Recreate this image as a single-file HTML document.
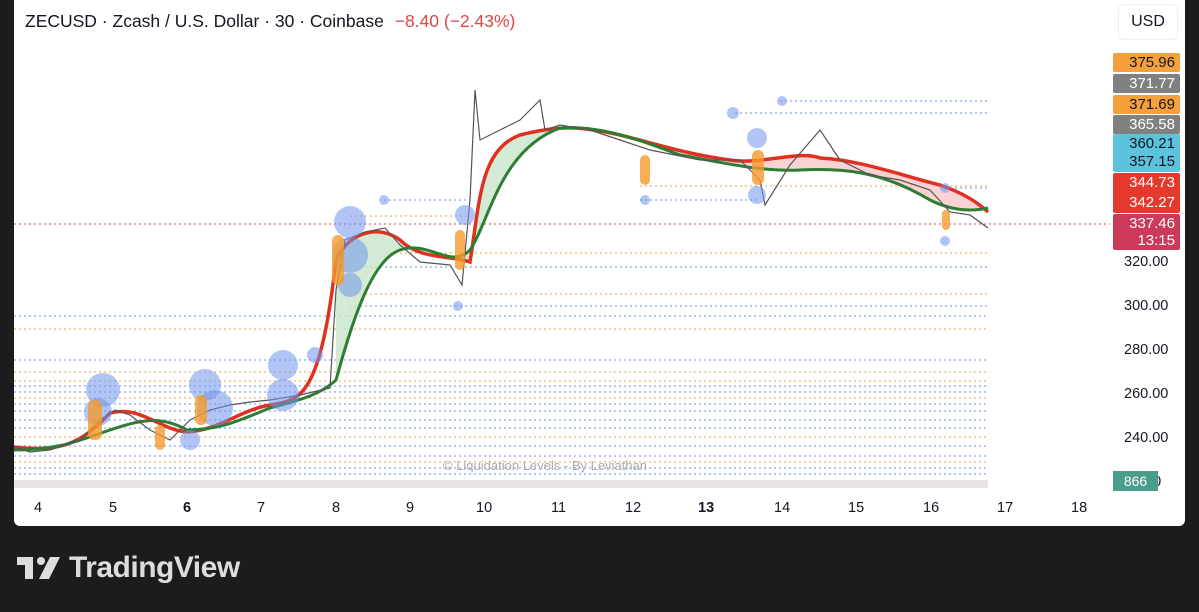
<!DOCTYPE html>
<html><head><meta charset="utf-8"><style>
body{margin:0;width:1199px;height:612px;background:#1c1c1c;overflow:hidden;font-family:"Liberation Sans",sans-serif;position:relative}
#p{position:absolute;left:14px;top:0;width:1171px;height:526px;background:#fff;border-radius:0 0 6px 6px}
.t{position:absolute;font-size:17.5px;color:#131722;white-space:nowrap}
.lab{position:absolute;left:1113px;width:67px;height:19px;font-size:15px;text-align:right;box-sizing:border-box;padding-right:5px;line-height:19px;border-radius:2px}
.ax{position:absolute;font-size:14.5px;color:#131722}
</style></head><body>
<div id="p"></div>
<svg width="1199" height="612" style="position:absolute;left:0;top:0">
<g stroke-dasharray="2,3" stroke-width="1">
<line x1="14" y1="224" x2="1110" y2="224" stroke="#e04040"/>
<line x1="780" y1="101" x2="988" y2="101" stroke="#6a8ee8"/>
<line x1="735" y1="113" x2="988" y2="113" stroke="#6a8ee8"/>
<line x1="640" y1="186" x2="988" y2="186" stroke="#f0a040"/>
<line x1="640" y1="200" x2="760" y2="200" stroke="#6a8ee8"/>
<line x1="384" y1="200" x2="470" y2="200" stroke="#6a8ee8"/>
<line x1="350" y1="216" x2="470" y2="216" stroke="#f0a040"/>
<line x1="940" y1="188" x2="988" y2="188" stroke="#6a8ee8"/>
<line x1="350" y1="253" x2="988" y2="253" stroke="#f0a040"/>
<line x1="350" y1="267" x2="988" y2="267" stroke="#6a8ee8"/>
<line x1="350" y1="294" x2="988" y2="294" stroke="#f0a040"/>
<line x1="350" y1="306" x2="988" y2="306" stroke="#6a8ee8"/>
<line x1="14" y1="316" x2="988" y2="316" stroke="#6a8ee8"/>
<line x1="14" y1="329" x2="988" y2="329" stroke="#f0a040"/>
<line x1="14" y1="360" x2="988" y2="360" stroke="#6a8ee8"/>
<line x1="14" y1="372" x2="988" y2="372" stroke="#f0a040"/>
<line x1="14" y1="381" x2="988" y2="381" stroke="#f0a040"/>
<line x1="14" y1="386" x2="988" y2="386" stroke="#6a8ee8"/>
<line x1="14" y1="392" x2="988" y2="392" stroke="#6a8ee8"/>
<line x1="14" y1="398" x2="988" y2="398" stroke="#f0a040"/>
<line x1="14" y1="404" x2="988" y2="404" stroke="#6a8ee8"/>
<line x1="14" y1="411" x2="988" y2="411" stroke="#6a8ee8"/>
<line x1="14" y1="420" x2="988" y2="420" stroke="#6a8ee8"/>
<line x1="14" y1="428" x2="988" y2="428" stroke="#6a8ee8"/>
<line x1="14" y1="437" x2="988" y2="437" stroke="#f0a040"/>
<line x1="14" y1="446" x2="988" y2="446" stroke="#6a8ee8"/>
<line x1="14" y1="456" x2="988" y2="456" stroke="#6a8ee8"/>
<line x1="14" y1="462" x2="988" y2="462" stroke="#f0a040"/>
<line x1="14" y1="468" x2="988" y2="468" stroke="#6a8ee8"/>
<line x1="14" y1="474" x2="988" y2="474" stroke="#6a8ee8"/>
</g>
<path d="M336,380 C350,330 370,260 400,250 C430,240 450,270 470,250 C490,220 500,150 560,128 L520,135 C480,150 480,200 470,262 C450,255 420,260 400,240 C380,225 350,230 336,260 Z" fill="#c8e6c9" opacity=".8"/>
<path d="M560,128 C600,125 640,140 680,155 C720,162 760,172 800,170 C840,168 880,170 930,200 C950,210 970,212 988,208 L988,212 C975,200 960,192 940,185 C900,175 860,160 820,158 C800,150 760,165 730,160 C690,155 660,145 620,135 C580,126 560,125 560,128Z" fill="#f8c8c8" opacity=".8"/>
<path d="M14,447 C60,452 80,445 110,413 C140,405 160,430 187,432 C220,430 240,410 270,405 C300,400 320,400 336,260 C350,230 380,225 400,240 C420,260 450,255 470,262 C480,200 480,150 520,135 C560,125 580,126 620,135 C660,145 690,155 730,160 C760,165 800,150 820,158 C860,160 900,175 940,185 C960,192 975,200 988,212" fill="none" stroke="#e03020" stroke-width="3.5"/>
<path d="M14,450 C60,450 80,440 110,430 C140,420 160,415 187,430 C220,430 240,420 270,408 C300,400 320,395 336,380 C350,330 370,260 400,250 C430,240 450,270 470,250 C490,220 500,150 560,128 C600,125 640,140 680,155 C720,162 760,172 800,170 C840,168 880,170 930,200 C950,210 970,212 988,208" fill="none" stroke="#2e7d32" stroke-width="3"/>
<path d="M14,447 L30,452 L50,450 L65,445 L80,440 L100,420 L115,410 L130,415 L150,430 L170,440 L190,420 L210,410 L230,405 L250,402 L270,400 L300,395 L330,388 L336,290 L345,240 L365,232 L385,228 L400,245 L420,262 L450,265 L462,285 L470,200 L475,90 L480,140 L490,135 L520,120 L540,100 L545,130 L560,125 L590,130 L620,140 L650,150 L700,160 L740,160 L760,180 L765,205 L790,165 L820,130 L840,160 L870,175 L900,180 L930,190 L950,212 L970,215 L988,228" fill="none" stroke="#555" stroke-width="1.2"/>
<g fill="#6f96ec" fill-opacity="0.55">
<circle cx="103" cy="390" r="17"/><circle cx="98" cy="412" r="14"/><circle cx="205" cy="385" r="16"/><circle cx="215" cy="408" r="18"/><circle cx="190" cy="440" r="10"/>
<circle cx="283" cy="365" r="15"/><circle cx="283" cy="395" r="16"/><circle cx="315" cy="355" r="8"/>
<circle cx="350" cy="222" r="16"/><circle cx="350" cy="255" r="18"/><circle cx="350" cy="285" r="12"/><circle cx="465" cy="215" r="10"/><circle cx="458" cy="306" r="5"/><circle cx="384" cy="200" r="5"/>
<circle cx="757" cy="138" r="10"/><circle cx="757" cy="195" r="9"/><circle cx="733" cy="113" r="6"/><circle cx="782" cy="101" r="5"/><circle cx="645" cy="200" r="5"/><circle cx="945" cy="241" r="5"/><circle cx="945" cy="188" r="5"/>
</g>
<g fill="#f59a2c" fill-opacity="0.8">
<rect x="88" y="400" width="14" height="40" rx="6"/><rect x="195" y="395" width="12" height="30" rx="6"/><rect x="155" y="425" width="10" height="25" rx="5"/>
<rect x="332" y="235" width="12" height="50" rx="6"/><rect x="455" y="230" width="10" height="40" rx="5"/><rect x="752" y="150" width="12" height="35" rx="6"/><rect x="640" y="155" width="10" height="30" rx="5"/><rect x="942" y="210" width="8" height="20" rx="4"/>
</g>
<g fill="#e8e4e4"><rect x="14" y="480" width="974" height="8"/></g>
</svg>
<div class="t" style="left:25px;top:11px">ZECUSD · Zcash / U.S. Dollar · 30 · Coinbase <span style="color:#e04545;margin-left:6px">−8.40 (−2.43%)</span></div>
<div style="position:absolute;left:1118px;top:4px;width:58px;height:34px;border:1px solid #eee;border-radius:6px;font-size:16px;text-align:center;line-height:34px;color:#131722">USD</div>
<div class="lab" style="top:53px;background:#f5a03a;color:#131722">375.96</div>
<div class="lab" style="top:74px;background:#808080;color:#fff">371.77</div>
<div class="lab" style="top:95px;background:#f5a03a;color:#131722">371.69</div>
<div class="lab" style="top:115px;background:#808080;color:#fff">365.58</div>
<div class="lab" style="top:134px;height:38px;background:#5bc3dc;color:#131722;line-height:18px;padding-top:1px">360.21<br>357.15</div>
<div class="lab" style="top:173px;height:40px;background:#e5392d;color:#fff;line-height:20px">344.73<br>342.27</div>
<div class="lab" style="top:214px;height:36px;background:#cc3a5a;color:#fff;line-height:17px;padding-top:1px">337.46<br>13:15</div>
<div class="ax" style="left:1124px;top:254px">320.00</div>
<div class="ax" style="left:1124px;top:298px">300.00</div>
<div class="ax" style="left:1124px;top:342px">280.00</div>
<div class="ax" style="left:1124px;top:386px">260.00</div>
<div class="ax" style="left:1124px;top:430px">240.00</div>
<div class="ax" style="left:1145px;top:474px">00</div>
<div style="position:absolute;left:1113px;top:471px;width:45px;height:20px;background:#4a9c8c;color:#fff;font-size:14px;line-height:20px;text-align:center">866</div>
<div style="position:absolute;left:443px;top:458px;font-size:13px;color:#aaa">© Liquidation Levels - By Leviathan</div>
<div class="ax" style="left:34px;top:500px">4</div><div class="ax" style="left:109px;top:500px">5</div><div class="ax" style="left:183px;top:500px;font-weight:bold">6</div><div class="ax" style="left:257px;top:500px">7</div><div class="ax" style="left:332px;top:500px">8</div><div class="ax" style="left:406px;top:500px">9</div><div class="ax" style="left:476px;top:500px">10</div><div class="ax" style="left:551px;top:500px">11</div><div class="ax" style="left:625px;top:500px">12</div><div class="ax" style="left:698px;top:500px;font-weight:bold">13</div><div class="ax" style="left:774px;top:500px">14</div><div class="ax" style="left:848px;top:500px">15</div><div class="ax" style="left:923px;top:500px">16</div><div class="ax" style="left:997px;top:500px">17</div><div class="ax" style="left:1071px;top:500px">18</div>
<svg width="45" height="24" style="position:absolute;left:17px;top:557px"><path d="M0,0H16V22H8V8H0Z" fill="#ddd"/><circle cx="24" cy="4" r="4" fill="#ddd"/><path d="M33,0H43L32,22H22Z" fill="#ddd"/></svg>
<div style="position:absolute;left:69px;top:551px;font-size:30px;font-weight:bold;color:#ddd;letter-spacing:-0.5px">TradingView</div>
</body></html>
